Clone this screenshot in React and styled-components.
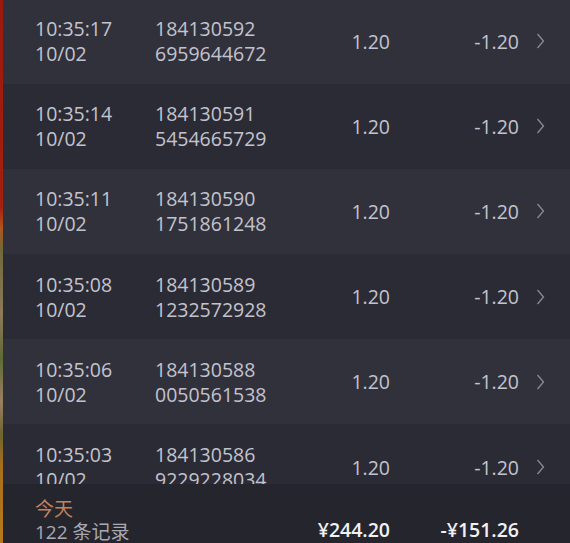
import React from 'react';
import styled, { createGlobalStyle } from 'styled-components';

const records = [
  { time: '10:35:17', date: '10/02', idTop: '184130592', idBottom: '6959644672', amount: '1.20', change: '-1.20' },
  { time: '10:35:14', date: '10/02', idTop: '184130591', idBottom: '5454665729', amount: '1.20', change: '-1.20' },
  { time: '10:35:11', date: '10/02', idTop: '184130590', idBottom: '1751861248', amount: '1.20', change: '-1.20' },
  { time: '10:35:08', date: '10/02', idTop: '184130589', idBottom: '1232572928', amount: '1.20', change: '-1.20' },
  { time: '10:35:06', date: '10/02', idTop: '184130588', idBottom: '0050561538', amount: '1.20', change: '-1.20' },
  { time: '10:35:03', date: '10/02', idTop: '184130586', idBottom: '9229228034', amount: '1.20', change: '-1.20' },
];

const GlobalStyle = createGlobalStyle`
  html, body {
    margin: 0;
    padding: 0;
    background: #2b2b35;
  }
  body {
    font-family: "Open Sans", "Noto Sans CJK SC", sans-serif;
  }
`;

const Page = styled.div`
  display: flex;
  width: 570px;
  height: 543px;
  overflow: hidden;
`;

const EdgeStrip = styled.div`
  flex: 0 0 3px;
  background: linear-gradient(
    to bottom,
    #9a1a0e 0%,
    #a3200f 38%,
    #b2541c 42%,
    #6f6a3a 46%,
    #8d7a5a 58%,
    #5f6a34 66%,
    #9a8062 74%,
    #6e6530 80%,
    #a8701c 86%,
    #b7791a 100%
  );
`;

const Main = styled.div`
  flex: 1;
  display: flex;
  flex-direction: column;
  min-width: 0;
`;

const List = styled.div`
  flex: 1;
  overflow: hidden;
`;

const Scroller = styled.div`
  margin-top: -1.5px;
`;

const Columns = styled.div`
  display: grid;
  grid-template-columns: 120px 1fr 100px 129px 26px;
  align-items: center;
  padding: 0 25px 0 32px;
`;

const Row = styled(Columns)`
  height: 85.2px;
  background: ${({ $odd }) => ($odd ? '#31313c' : '#2b2b35')};
  color: #c3c3cd;
  font-size: 19.5px;
  line-height: 25px;
`;

const Stack = styled.div`
  display: flex;
  flex-direction: column;
  white-space: nowrap;
`;

const Num = styled.div`
  text-align: right;
  white-space: nowrap;
`;

const Chevron = styled.svg`
  justify-self: end;
  width: 9px;
  height: 16px;
`;

const Footer = styled(Columns)`
  flex: 0 0 59px;
  box-sizing: border-box;
  align-items: start;
  padding-top: 14px;
  background: #25252e;
  overflow: hidden;
`;

const Summary = styled.div`
  grid-column: span 2;
  display: flex;
  flex-direction: column;
  font-size: 19px;
  line-height: 23px;
  white-space: nowrap;
`;

const Today = styled.span`
  color: #c4825c;
`;

const Count = styled.span`
  color: #a9a9b3;
`;

const Total = styled(Num)`
  align-self: center;
  margin-top: 16px;
  color: #f1f1f3;
  font-size: 19.5px;
  font-weight: 600;
`;

function ChevronIcon() {
  return (
    <Chevron viewBox="0 0 9 16">
      <polyline
        points="1.5,1 7.5,8 1.5,15"
        fill="none"
        stroke="#8b8b97"
        strokeWidth="1.3"
      />
    </Chevron>
  );
}

export default function App() {
  return (
    <>
      <GlobalStyle />
      <Page>
        <EdgeStrip />
        <Main>
          <List>
            <Scroller>
              {records.map((r, i) => (
                <Row key={r.idTop} $odd={i % 2 === 0}>
                  <Stack>
                    <span>{r.time}</span>
                    <span>{r.date}</span>
                  </Stack>
                  <Stack>
                    <span>{r.idTop}</span>
                    <span>{r.idBottom}</span>
                  </Stack>
                  <Num>{r.amount}</Num>
                  <Num>{r.change}</Num>
                  <ChevronIcon />
                </Row>
              ))}
            </Scroller>
          </List>
          <Footer>
            <Summary>
              <Today>今天</Today>
              <Count>122 条记录</Count>
            </Summary>
            <Total>¥244.20</Total>
            <Total>-¥151.26</Total>
          </Footer>
        </Main>
      </Page>
    </>
  );
}
